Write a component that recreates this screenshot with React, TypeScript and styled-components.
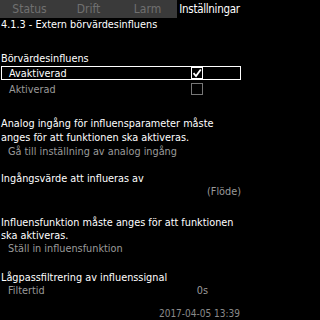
import React from "react";
import styled, {createGlobalStyle} from "styled-components";

const Global = createGlobalStyle`
  html, body {
    margin: 0;
    padding: 0;
    background: #000;
  }
  body {
    width: 242px;
    height: 320px;
    overflow: hidden;
    font-family: "DejaVu Sans Condensed", "DejaVu Sans", sans-serif;
    font-size: 10.8px;
    color: #fff;
  }
`

const S = {
    Screen: styled.div`
      width: 242px;
      height: 320px;
      background: #000;
      display: flex;
      flex-direction: column;
    `,
    TabBar: styled.div`
      display: flex;
      height: 18px;
    `,
    Tab: styled.div<{ $active?: boolean }>`
      width: ${p => p.$active ? "65px" : "59px"};
      display: flex;
      align-items: center;
      justify-content: center;
      background: ${p => p.$active ? "#000" : "#3a3a3a"};
      color: ${p => p.$active ? "#fff" : "#707070"};
      font-size: ${p => p.$active ? "11.5px" : "12px"};
      letter-spacing: ${p => p.$active ? "-0.3px" : "0"};
      white-space: nowrap;
    `,
    Title: styled.div`
      padding: 0 1px;
      line-height: 14px;
    `,
    Heading: styled.div<{ $top: number }>`
      margin-top: ${p => p.$top}px;
      padding: 0 1px;
      line-height: 13px;
    `,
    OptionRow: styled.div<{ $selected?: boolean; $top: number }>`
      display: flex;
      align-items: center;
      justify-content: space-between;
      height: 12px;
      margin: ${p => p.$top}px 1px 0;
      padding: 0 37px 0 7px;
      border: 1px solid ${p => p.$selected ? "#fff" : "transparent"};
      color: ${p => p.$selected ? "#fff" : "#9a9a9a"};
    `,
    Check: styled.div<{ $checked?: boolean }>`
      width: 10px;
      height: 10px;
      border: 1px solid ${p => p.$checked ? "#fff" : "#777"};
      display: flex;
      align-items: center;
      justify-content: center;
    `,
    Para: styled.div<{ $top: number; $lh: number }>`
      margin-top: ${p => p.$top}px;
      padding: 0 1px;
      line-height: ${p => p.$lh}px;
    `,
    Link: styled.div`
      padding: 0 8px;
      line-height: 13px;
      color: #9a9a9a;
    `,
    ValueRow: styled.div<{ $pad: number }>`
      display: flex;
      justify-content: space-between;
      padding: 0 ${p => p.$pad}px 0 8px;
      line-height: 14px;
      color: #9a9a9a;
    `,
    Footer: styled.div`
      margin-top: auto;
      padding: 0 2px 0;
      text-align: right;
      color: #8a8a8a;
      font-size: 10px;
      line-height: 13px;
    `
}

const CheckMark = () => (
    <svg width="10" height="10" viewBox="0 0 10 10">
        <path d="M1.5 5.2 L4 8 L8.8 1.5" stroke="#fff" strokeWidth="1.8" fill="none"/>
    </svg>
)

export default function App() {
    return (
        <S.Screen>
            <Global/>
            <S.TabBar>
                <S.Tab>Status</S.Tab>
                <S.Tab>Drift</S.Tab>
                <S.Tab>Larm</S.Tab>
                <S.Tab $active>Inställningar</S.Tab>
            </S.TabBar>
            <S.Title>4.1.3 - Extern börvärdesinfluens</S.Title>
            <S.Heading $top={20}>Börvärdesinfluens</S.Heading>
            <S.OptionRow $selected $top={1}>
                <span>Avaktiverad</span>
                <S.Check $checked><CheckMark/></S.Check>
            </S.OptionRow>
            <S.OptionRow $top={2}>
                <span>Aktiverad</span>
                <S.Check/>
            </S.OptionRow>
            <S.Para $top={21} $lh={14}>
                Analog ingång för influensparameter måste anges för att funktionen ska aktiveras.
            </S.Para>
            <S.Link>Gå till inställning av analog ingång</S.Link>
            <S.Heading $top={14}>Ingångsvärde att influeras av</S.Heading>
            <S.ValueRow $pad={1}>
                <span/>
                <span>(Flöde)</span>
            </S.ValueRow>
            <S.Para $top={17} $lh={13}>
                Influensfunktion måste anges för att funktionen ska aktiveras.
            </S.Para>
            <S.Link>Ställ in influensfunktion</S.Link>
            <S.Heading $top={16}>Lågpassfiltrering av influenssignal</S.Heading>
            <S.ValueRow $pad={34}>
                <span>Filtertid</span>
                <span>0s</span>
            </S.ValueRow>
            <S.Footer>2017-04-05 13:39</S.Footer>
        </S.Screen>
    )
}
